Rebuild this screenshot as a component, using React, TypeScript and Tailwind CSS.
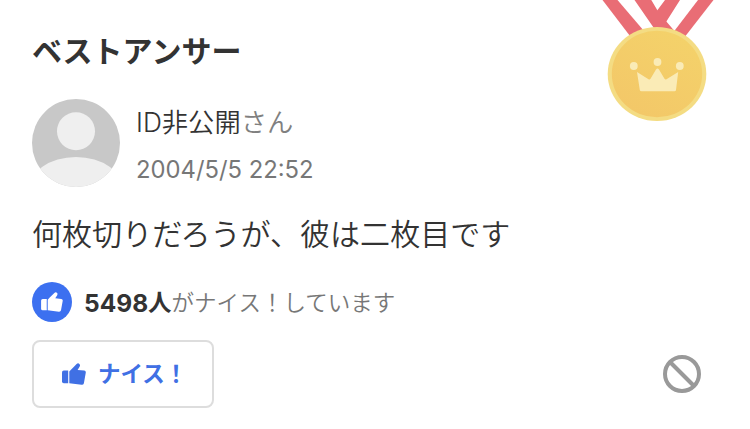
import { clsx } from "clsx";

const answer = {
  user: "ID非公開",
  date: "2004/5/5 22:52",
  body: "何枚切りだろうが、彼は二枚目です",
  niceCount: 5498,
};

function Medal() {
  return (
    <svg
      viewBox="0 0 140 130"
      className="absolute top-0 left-[590px] h-[130px] w-[140px]"
      aria-hidden="true"
    >
      <defs>
        <linearGradient id="gold" x1="0.8" y1="0" x2="0.2" y2="1">
          <stop offset="0" stopColor="#f4d26a" />
          <stop offset="1" stopColor="#f3c768" />
        </linearGradient>
      </defs>
      <g fill="#e96d75">
        <path d="M12.5 0H27.5L54 31L40 36Z" />
        <path d="M75 0H90L77 20.5L68 35L66 12Z" />
        <path d="M108 0H123.5L95.5 36L82 34Z" />
        <path d="M44.5 0H61.3L68.7 12.5L87 34H68Z" />
      </g>
      <ellipse cx="67" cy="74" rx="49.3" ry="47" fill="#f4dc83" />
      <ellipse cx="67" cy="74" rx="45.2" ry="43.3" fill="url(#gold)" />
      <g fill="#faebb6">
        <circle cx="43.8" cy="66" r="3.9" />
        <circle cx="67.5" cy="62" r="3.9" />
        <circle cx="89.8" cy="66" r="3.9" />
        <path d="M47 72L58.5 79.3Q59.8 80 60.5 78.8L66 69.5Q67.5 67.5 69 69.5L74.5 78.8Q75.3 80 76.5 79.3L88.2 72L86 90Q85.8 91.3 84.5 91.3H51.5Q50 91.3 49.8 90Z" />
      </g>
    </svg>
  );
}

function Avatar() {
  return (
    <svg viewBox="0 0 88 88" className="size-[88px] shrink-0" aria-hidden="true">
      <clipPath id="avatar">
        <circle cx="44" cy="44" r="44" />
      </clipPath>
      <g clipPath="url(#avatar)">
        <rect width="88" height="88" fill="#c8c8c8" />
        <circle cx="44" cy="32.3" r="19" fill="#efefef" />
        <ellipse cx="44" cy="92" rx="48" ry="34" fill="#efefef" />
      </g>
    </svg>
  );
}

function ThumbIcon({ className }: { className?: string }) {
  return (
    <svg
      viewBox="0 0 24 22"
      fill="currentColor"
      className={clsx("shrink-0", className)}
      aria-hidden="true"
    >
      <path d="M1.8 7.6H6.2V20.2H1.8Q0 20.2 0 18.4V9.4Q0 7.6 1.8 7.6Z" />
      <path d="M7.3 8.4Q9.2 6.4 11.2 4.4L14.6 1Q16 -0.3 17.4 0.9Q18.5 2 17.7 3.5L15.6 6.9L22.2 7.6Q24 7.8 23.8 9.6L21.9 20.2Q21.4 22 19.6 21.8L7.3 20.2Z" />
    </svg>
  );
}

export default function App() {
  return (
    <main className="relative h-[429px] w-[750px] overflow-hidden bg-white px-8 pt-[29px] font-['Inter','Noto_Sans_CJK_JP',sans-serif] text-[#333]">
      <Medal />

      <h2 className="h-[44px] text-[30px] leading-[44px] font-bold">
        ベストアンサー
      </h2>

      <div className="mt-[26px] flex gap-4">
        <Avatar />
        <div className="flex flex-col">
          <p className="h-[46px] text-[26.3px] leading-[48px] font-[350] whitespace-nowrap">
            {answer.user}
            <span className="text-[#808080]">さん</span>
          </p>
          <p className="h-[48px] text-[23.8px] leading-[50px] whitespace-nowrap text-[#777]">
            {answer.date}
          </p>
        </div>
      </div>

      <p className="mt-[16px] h-[50px] text-[30.05px] leading-[50px] font-[350] whitespace-nowrap">
        {answer.body}
      </p>

      <div className="mt-[23px] flex h-10 items-center">
        <span className="flex size-10 items-center justify-center rounded-full bg-[#3c70f0] text-white">
          <ThumbIcon className="h-[20px] w-[22px]" />
        </span>
        <p className="ml-[12px] flex items-center pt-0.5 text-[22.5px] leading-10 font-[350] whitespace-nowrap text-[#777]">
          <b className="text-[24.5px] font-bold text-[#333]">
            {answer.niceCount}
          </b>
          <b className="text-[23.5px] font-bold text-[#333]">人</b>
          がナイス！しています
        </p>
      </div>

      <div className="mt-[18px] flex items-center justify-between pr-[17px]">
        <button className="flex h-[68px] w-[182px] items-center rounded-lg border-2 border-[#ddd] pl-7 text-[22.5px] font-bold whitespace-nowrap text-[#4070e4]">
          <ThumbIcon className="mr-3 h-[22px] w-6" />
          ナイス！
        </button>
        <svg
          viewBox="0 0 38 38"
          fill="none"
          stroke="#999"
          strokeWidth="4"
          className="size-[38px]"
          aria-hidden="true"
        >
          <circle cx="19" cy="19" r="17" />
          <path d="M7 7L31 31" />
        </svg>
      </div>
    </main>
  );
}
